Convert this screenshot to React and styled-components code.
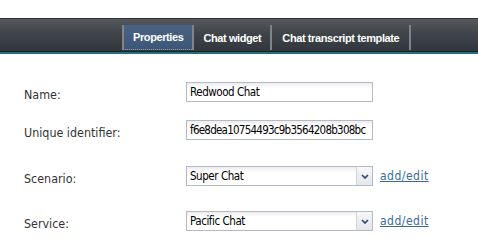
import React from 'react';
import styled, { createGlobalStyle } from 'styled-components';

const GlobalStyle = createGlobalStyle`
  html, body {
    margin: 0;
    padding: 0;
    background: #ffffff;
  }
`;

const Page = styled.div`
  width: 478px;
  height: 252px;
  padding-top: 18px;
  box-sizing: border-box;
  overflow: hidden;
`;

const Toolbar = styled.div`
  height: 36px;
  box-sizing: border-box;
  border-top: 1px solid #2e3135;
  border-bottom: 2px solid #23707c;
  background: linear-gradient(#565a5f, #3f4449 45%, #30363c);
  box-shadow: inset 0 -1px 0 #1d2226;
  display: flex;
  align-items: flex-start;
  padding: 6px 0 0 122px;
`;

const Tab = styled.div`
  height: 25px;
  box-sizing: border-box;
  display: flex;
  align-items: center;
  padding: 0 ${(p) => p.$pad}px;
  border-left: 2px solid #80858a;
  ${(p) => p.$last && 'border-right: 2px solid #80858a;'}
  background: ${(p) => (p.$active ? 'linear-gradient(#4a6383, #3d5778)' : 'transparent')};
  ${(p) => p.$active && 'border-bottom: 1px dotted #8a9bb0;'}
  color: #ffffff;
  font-family: "Liberation Sans", Arial, sans-serif;
  font-weight: bold;
  font-size: 11px;
  letter-spacing: -0.4px;
`;

const Form = styled.div`
  padding: 28px 0 0 24px;
  display: flex;
  flex-direction: column;
`;

const Row = styled.div`
  display: flex;
  align-items: center;
  height: 20px;
  margin-bottom: ${(p) => p.$gap}px;
`;

const Label = styled.div`
  width: 162px;
  padding-top: 5px;
  font-family: "DejaVu Sans Condensed", "DejaVu Sans", sans-serif;
  font-size: 12.4px;
  color: #333333;
`;

const Field = styled.div`
  width: 187px;
  height: 20px;
  box-sizing: border-box;
  border: 1px solid #b5b8c8;
  background: linear-gradient(#ececec, #ffffff 5px);
  display: flex;
  align-items: center;
  overflow: hidden;
  font-family: "DejaVu Sans Condensed", "DejaVu Sans", sans-serif;
  font-size: 11.5px;
  letter-spacing: -0.45px;
  color: #000000;
  white-space: nowrap;
`;

const FieldText = styled.span`
  flex: 1;
  padding-left: 3px;
  overflow: hidden;
  letter-spacing: ${(p) => (p.$tight ? '-0.75px' : 'inherit')};
`;

const Trigger = styled.div`
  width: 15px;
  height: 18px;
  border-left: 1px solid #d0d3dc;
  background: linear-gradient(#f6f7f8, #e4e6e9);
  display: flex;
  align-items: center;
  justify-content: center;
`;

const EditLink = styled.a`
  margin-left: 7px;
  font-family: "DejaVu Sans Condensed", "DejaVu Sans", sans-serif;
  font-size: 12px;
  letter-spacing: 0.5px;
  color: #3a6a9c;
  text-decoration: underline;
  cursor: pointer;
`;

const Chevron = () => (
  <svg width="8" height="5" viewBox="0 0 8 5">
    <path d="M1 1 L4 4 L7 1" fill="none" stroke="#2c4a72" strokeWidth="1.7" />
  </svg>
);

const Select = ({ value }) => (
  <Field>
    <FieldText>{value}</FieldText>
    <Trigger>
      <Chevron />
    </Trigger>
  </Field>
);

const App = () => (
  <Page>
    <GlobalStyle />
    <Toolbar>
      <Tab $active $pad={9}>Properties</Tab>
      <Tab $pad={9}>Chat widget</Tab>
      <Tab $pad={10} $last>Chat transcript template</Tab>
    </Toolbar>
    <Form>
      <Row $gap={18}>
        <Label>Name:</Label>
        <Field>
          <FieldText>Redwood Chat</FieldText>
        </Field>
      </Row>
      <Row $gap={26}>
        <Label>Unique identifier:</Label>
        <Field>
          <FieldText $tight>f6e8dea10754493c9b3564208b308bc</FieldText>
        </Field>
      </Row>
      <Row $gap={25}>
        <Label>Scenario:</Label>
        <Select value="Super Chat" />
        <EditLink>add/edit</EditLink>
      </Row>
      <Row $gap={0}>
        <Label>Service:</Label>
        <Select value="Pacific Chat" />
        <EditLink>add/edit</EditLink>
      </Row>
    </Form>
  </Page>
);

export default App;
